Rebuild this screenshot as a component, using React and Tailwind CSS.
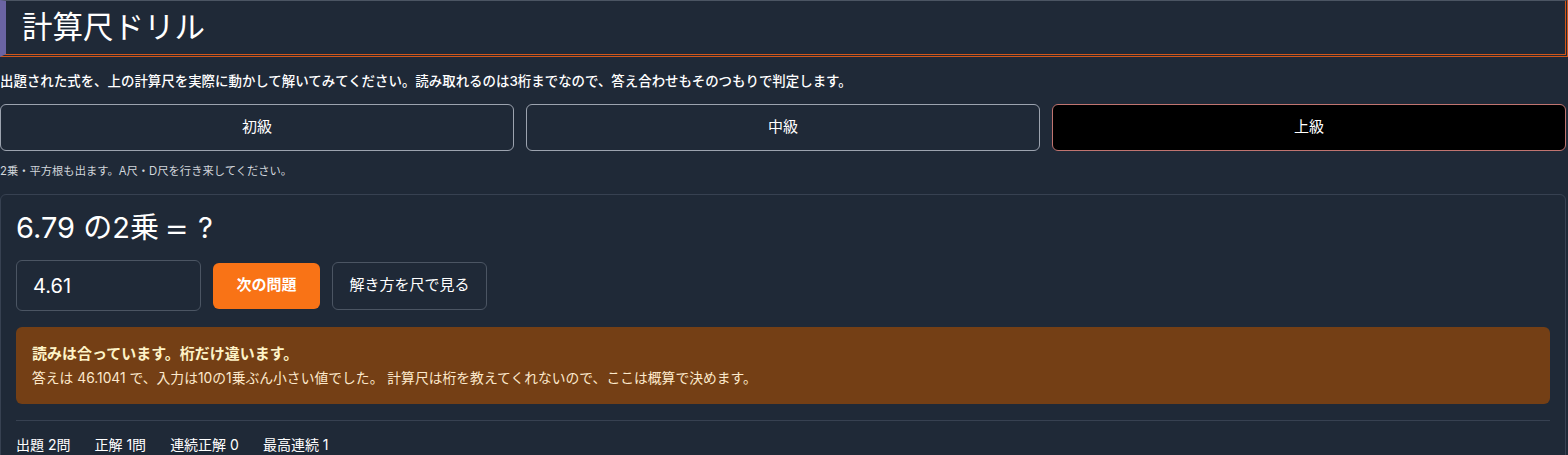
export default function App() {
  const font = { fontFamily: '"Inter", "Noto Sans CJK JP", sans-serif' };
  return (
    <div className="min-h-[455px] w-full bg-[#1f2937] text-white" style={font}>
      <div className="flex h-[57px] items-center border-t border-t-[#4b5563] border-l-[6px] border-l-[#6a64a3] border-r-[3px] border-b-[3px] border-r-[#d0561a] border-b-[#d0561a] border-double pl-[16px]" style={{ borderTopStyle: 'solid', borderLeftStyle: 'solid' }}>
        <h1 className="text-[30.5px] leading-none font-normal">計算尺ドリル</h1>
      </div>
      <div className="pr-[2px]">
        <p className="mt-4 text-[13.45px] leading-4 font-medium">出題された式を、上の計算尺を実際に動かして解いてみてください。読み取れるのは3桁までなので、答え合わせもそのつもりで判定します。</p>
        <div className="mt-[15px] grid grid-cols-3 gap-3">
          <button className="h-[47px] rounded-md border border-[#9ca3af] bg-transparent text-[15px] text-white">初級</button>
          <button className="h-[47px] rounded-md border border-[#9ca3af] bg-transparent text-[15px] text-white">中級</button>
          <button className="h-[47px] rounded-md border border-[#c07470] bg-black text-[15px] text-white">上級</button>
        </div>
        <p className="mt-3 text-[11.3px] leading-4 text-[#d1d5db]">2乗・平方根も出ます。A尺・D尺を行き来してください。</p>
        <div className="mt-[15px] rounded-md border border-[#374151] px-[15px] pt-[16px] pb-6">
          <div className="flex items-baseline text-[29px] leading-[34px]">
            <span>6.79 の2乗</span>
            <span className="ml-[8px] inline-block scale-x-[1.35]">=</span>
            <span className="ml-[12px]">?</span>
          </div>
          <div className="mt-[15px] flex items-center gap-3">
            <div className="flex h-[51px] w-[185px] items-center rounded-md border border-[#4b5563] pl-4 text-[20px]">4.61</div>
            <button className="h-[46px] w-[107px] rounded-md bg-[#f97316] text-[15px] font-bold text-white">次の問題</button>
            <button className="h-[48px] w-[155px] rounded-md border border-[#4b5563] text-[15px] text-white">解き方を尺で見る</button>
          </div>
          <div className="mt-4 h-[77px] rounded-md bg-[#743f15] px-4 pt-[17px]">
            <div className="text-[15px] leading-5 font-bold text-[#fef3c7]">読みは合っています。桁だけ違います。</div>
            <div className="mt-[5px] text-[13.8px] leading-[18px] text-[#fde9cc]">答えは 46.1041 で、入力は10の1乗ぶん小さい値でした。 計算尺は桁を教えてくれないので、ここは概算で決めます。</div>
          </div>
          <div className="mt-4 border-t border-[#374151]"></div>
          <div className="mt-4 flex gap-6 text-[14px] leading-4">
            <span>出題 2問</span>
            <span>正解 1問</span>
            <span>連続正解 0</span>
            <span>最高連続 1</span>
          </div>
        </div>
      </div>
    </div>
  );
}
